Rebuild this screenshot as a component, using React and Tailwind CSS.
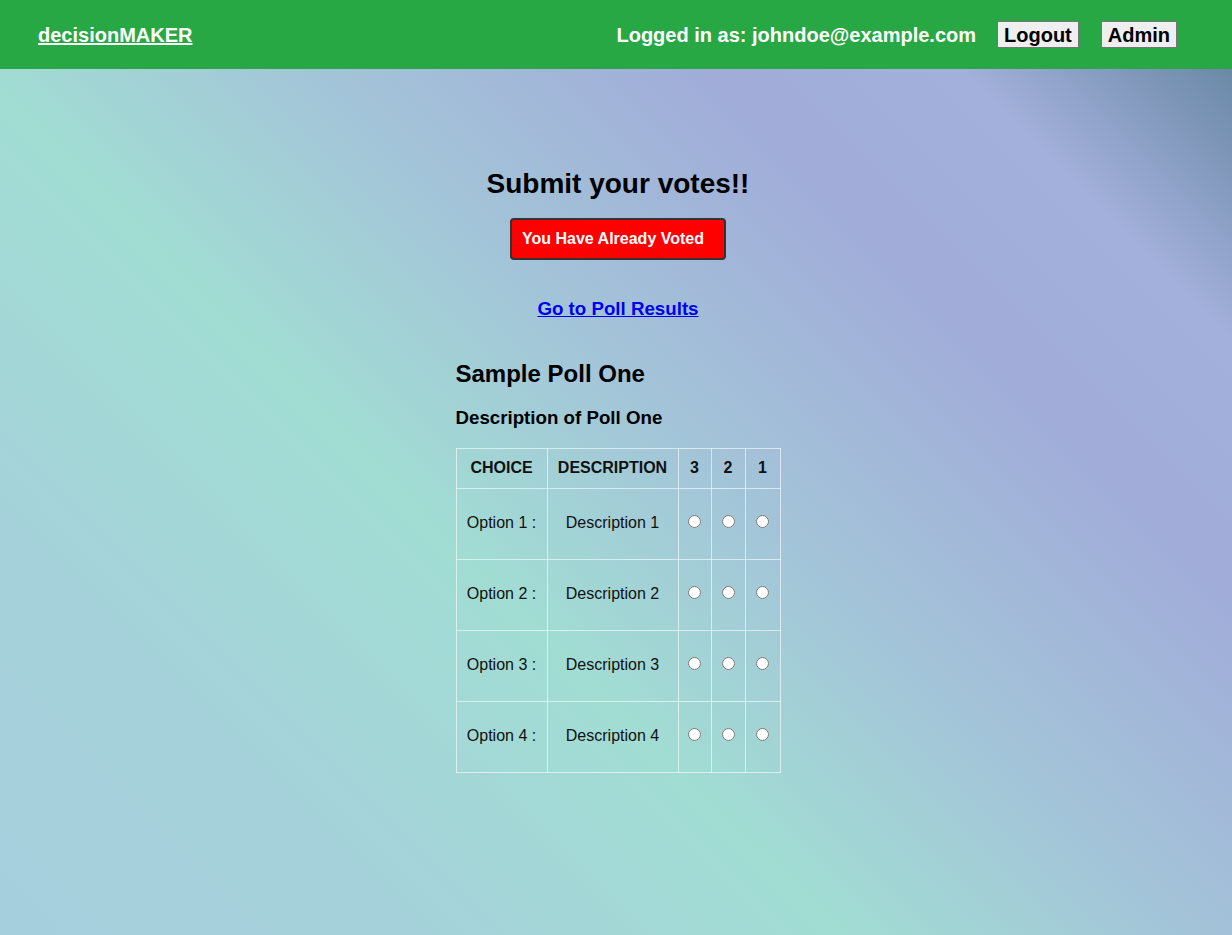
import React from "react";

const options = [
  { label: "Option 1 :", desc: "Description 1" },
  { label: "Option 2 :", desc: "Description 2" },
  { label: "Option 3 :", desc: "Description 3" },
  { label: "Option 4 :", desc: "Description 4" },
];

function Header() {
  return (
    <header className="h-[69px] bg-[#28a745] flex items-center justify-between pl-[38px] pr-[55px]">
      <a href="#" className="text-white text-[20px] font-bold underline">
        decisionMAKER
      </a>
      <div className="flex items-center">
        <span className="text-white text-[20px] font-bold">
          Logged in as: johndoe@example.com
        </span>
        <button className="ml-[21px] h-[27px] px-[6px] bg-[#efefef] border border-[#767676] text-black text-[20px] font-bold leading-none">
          Logout
        </button>
        <button className="ml-[22px] h-[27px] px-[6px] bg-[#efefef] border border-[#767676] text-black text-[20px] font-bold leading-none">
          Admin
        </button>
      </div>
    </header>
  );
}

function PollTable() {
  return (
    <table className="border-collapse text-[16px] text-[#111]">
      <thead>
        <tr className="h-[40px]">
          <th className="border border-white/60 w-[91px] font-bold text-center pb-[2px]">CHOICE</th>
          <th className="border border-white/60 w-[131px] font-bold text-center pb-[2px]">DESCRIPTION</th>
          <th className="border border-white/60 w-[33px] font-bold text-center pb-[2px]">3</th>
          <th className="border border-white/60 w-[34px] font-bold text-center pb-[2px]">2</th>
          <th className="border border-white/60 w-[35px] font-bold text-center pb-[2px]">1</th>
        </tr>
      </thead>
      <tbody>
        {options.map((o, i) => (
          <tr key={i} className="h-[71px]">
            <td className="border border-white/60 text-center pb-[2px]">{o.label}</td>
            <td className="border border-white/60 text-center pb-[2px]">{o.desc}</td>
            {[3, 2, 1].map((r) => (
              <td key={r} className="border border-white/60 text-center">
                <input
                  type="radio"
                  name={`rank-${r}-${i}`}
                  className="block mx-auto mb-[5px] w-[13px] h-[13px]"
                />
              </td>
            ))}
          </tr>
        ))}
      </tbody>
    </table>
  );
}

export default function App() {
  return (
    <div
      className="min-h-screen flex flex-col text-black"
      style={{ fontFamily: '"Liberation Sans", Arial, sans-serif' }}
    >
      <Header />
      <main className="flex-1 bg-[linear-gradient(45deg,#a6cfdd_0%,#a5d2da_20%,#a1ddd3_40%,#a3c6d8_55%,#a1acd9_75%,#a3b0db_87%,#6b89a7_100%)]">
        <div className="flex flex-col items-center pt-[99px] pl-[4px]">
          <h1 className="text-[28px] leading-[32px] font-bold">Submit your votes!!</h1>
          <button className="mt-[18px] w-[216px] h-[42px] bg-[#ff0000] border-2 border-[#333] rounded-[4px] text-white text-[16px] font-bold text-left pl-[10px]">
            You Have Already Voted
          </button>
          <h3 className="mt-[38px] text-[18.72px] leading-[22px] font-bold">
            <a href="#" className="text-[#0000ee] underline">
              Go to Poll Results
            </a>
          </h3>
          <div className="mt-[40px] text-left">
            <h2 className="text-[24px] leading-[28px] font-bold">Sample Poll One</h2>
            <h3 className="mt-[19px] text-[18.72px] leading-[22px] font-bold">
              Description of Poll One
            </h3>
            <div className="mt-[19px]">
              <PollTable />
            </div>
          </div>
        </div>
      </main>
    </div>
  );
}
